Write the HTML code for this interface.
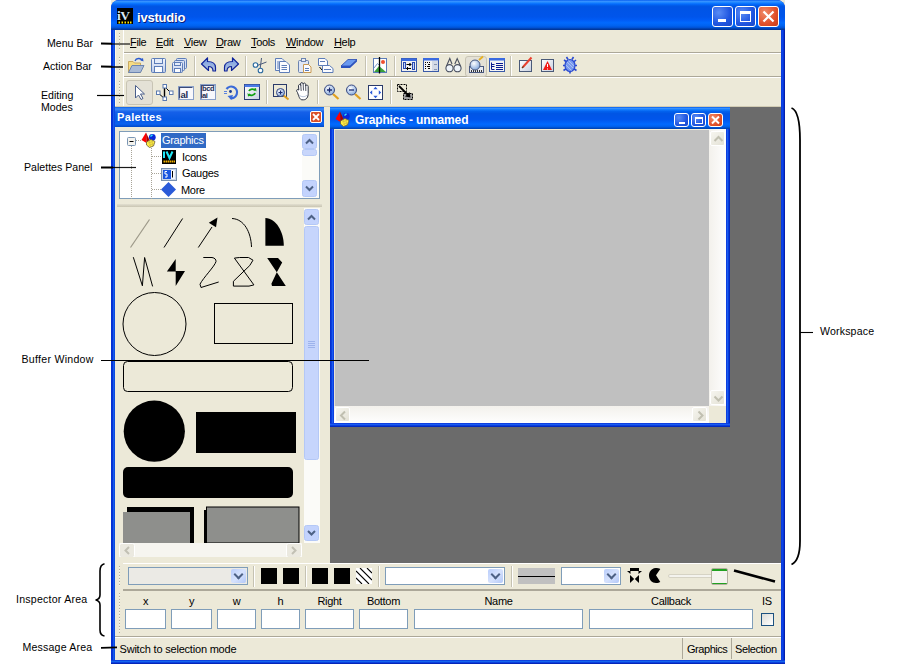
<!DOCTYPE html>
<html><head><meta charset="utf-8">
<style>
*{margin:0;padding:0;box-sizing:border-box}
html,body{width:907px;height:664px;overflow:hidden;background:#fff;font-family:"Liberation Sans",sans-serif;font-size:11px;color:#000}
.a{position:absolute}
.ann{position:absolute;font-size:10.6px;color:#000;white-space:nowrap;line-height:12px}
.hl{position:absolute;height:2px;background:#000}
#win{position:absolute;left:111px;top:0;width:674px;height:664px;background:#0831d9;border-radius:8px 8px 0 0;overflow:hidden}
#title{position:absolute;left:0;top:0;width:674px;height:30px;
background:linear-gradient(to bottom,#0058ee 0%,#3a93ff 4%,#288eff 7%,#127dff 10%,#0369fc 14%,#0262ee 17%,#0057e5 20%,#0054e5 24%,#0055eb 56%,#005bf5 66%,#026afe 76%,#0062ef 86%,#0052d6 92%,#0040ab 96%,#003092 100%)}
#lframe{position:absolute;left:0;top:30px;width:4px;height:634px;background:linear-gradient(to right,#0032d0,#0831d9 40%,#166aee 70%,#0831d9)}
#rframe{position:absolute;left:670px;top:30px;width:4px;height:634px;background:linear-gradient(to right,#0831d9,#0b4ae8 30%,#0831d9 65%,#001890)}
#bframe{position:absolute;left:0;top:660px;width:674px;height:4px;background:linear-gradient(to bottom,#0831d9,#166aee 40%,#0831d9 70%,#001ea0)}
#client{position:absolute;left:4px;top:30px;width:666px;height:630px;background:#ece9d8;overflow:hidden}
.tbtn{position:absolute;width:21px;height:21px;border:1px solid #fff;border-radius:3px;
background:radial-gradient(circle at 30% 30%,#5a8cf5,#1f55e0 60%,#1a48c8)}
.tbtn.close{background:radial-gradient(circle at 30% 30%,#f08b6a,#e0502a 60%,#c83c18)}
.menu{position:absolute;top:7px;font-size:11px}
.menu u{text-decoration:underline}
.sep{position:absolute;width:2px;border-left:1px solid #c5c2b2;border-right:1px solid #fff}
.grip{position:absolute;width:1px;background-image:linear-gradient(to bottom,#b0ac9c 0,#b0ac9c 1px,#f8f6ee 1px,#f8f6ee 2px,transparent 2px);background-size:1px 3px;background-repeat:repeat-y}
.ico{position:absolute;width:16px;height:16px}
.combo{position:absolute;height:18px;border:1px solid #7f9db9;background:#fff}
.combo i{position:absolute;top:1px;width:15px;height:14px;border-radius:2px;background:linear-gradient(135deg,#b9cdfb,#d6e2fd 50%,#b3c8f8)}
.combo i:after{content:"";position:absolute;left:4px;top:2px;width:5px;height:5px;border-right:2px solid #4d6185;border-bottom:2px solid #4d6185;transform:rotate(45deg)}
.wbtn{position:absolute;width:15px;height:14px;border:1px solid #fff;border-radius:3px;background:radial-gradient(circle at 30% 30%,#5a8cf5,#1f55e0 60%,#1a48c8)}
.wbtn.close{background:radial-gradient(circle at 30% 30%,#f08b6a,#e0502a 60%,#c83c18)}
.sbtn{position:absolute;width:15px;height:15px;border:1px solid #fff;border-radius:2px;background:linear-gradient(135deg,#f6f5ef,#e4e2d6)}
.lbl{text-align:center;letter-spacing:-0.3px;line-height:13px;white-space:nowrap}
.inp{position:absolute;top:609px;height:20px;border:1px solid #7f9db9;background:#fff}
</style></head><body>

<!-- annotations left -->
<div class="ann" style="left:47px;top:37px">Menu Bar</div>
<div class="ann" style="left:43px;top:60px">Action Bar</div>
<div class="ann" style="left:41px;top:89px">Editing</div>
<div class="ann" style="left:41px;top:101px">Modes</div>
<div class="ann" style="left:24px;top:161px">Palettes Panel</div>
<div class="ann" style="left:21.5px;top:353px;letter-spacing:0.27px">Buffer Window</div>
<div class="ann" style="left:16px;top:593px;letter-spacing:0.22px">Inspector Area</div>
<div class="ann" style="left:22.5px;top:641px;letter-spacing:0.18px">Message Area</div>
<div class="ann" style="left:820px;top:325px;letter-spacing:0.16px">Workspace</div>

<div class="a" style="left:111px;top:0;width:7px;height:7px;background:#ece9d8"></div>
<div class="a" style="left:778px;top:0;width:7px;height:7px;background:#ece9d8"></div>
<div id="win">
  <div id="title">
    <svg class="a" style="left:6px;top:8px" width="16" height="16" viewBox="0 0 16 16">
      <rect width="16" height="16" fill="#000"/>
      <text x="0" y="12" font-family="Liberation Serif" font-weight="bold" font-size="13.5" fill="#d8e8f8" letter-spacing="-0.5">iV</text>
      <path d="M1.5 14.5 H3 M4.5 14.5 H6 M7.5 14.5 H9 M10.5 14.5 H12 M13 14.5 H14.5" stroke="#ffe800" stroke-width="2"/>
    </svg>
    <div class="a" style="left:26px;top:10px;color:#fff;font-weight:bold;font-size:13px;line-height:15px;letter-spacing:-0.2px;text-shadow:1px 1px 0 #0a1e7a">ivstudio</div>
    <div class="tbtn" style="left:601px;top:6px"><div class="a" style="left:5px;top:12px;width:8px;height:3px;background:#fff"></div></div>
    <div class="tbtn" style="left:624px;top:6px"><div class="a" style="left:4px;top:4px;width:11px;height:11px;border:1px solid #fff;border-top-width:3px"></div></div>
    <div class="tbtn close" style="left:647px;top:6px"><svg class="a" style="left:0;top:0" width="19" height="19" viewBox="0 0 19 19"><path d="M4.5 4.5 L14.5 14.5 M14.5 4.5 L4.5 14.5" stroke="#fff" stroke-width="2.2"/></svg></div>
  </div>
  <div id="lframe"></div><div id="rframe"></div><div id="bframe"></div>
  <div id="client"></div>
</div>
<!-- CLIENT CONTENT (page coords) -->
<!-- rebar bands -->
<div class="a" style="left:115px;top:30px;width:1px;height:77px;background:#fff8e6"></div>
<div class="a" style="left:123px;top:30px;width:1px;height:76px;background:#fff"></div>
<div class="a" style="left:124px;top:52px;width:657px;height:1px;background:#aca899"></div>
<div class="a" style="left:124px;top:53px;width:657px;height:1px;background:#fff"></div>
<div class="a" style="left:124px;top:76px;width:657px;height:1px;background:#aca899"></div>
<div class="a" style="left:124px;top:77px;width:657px;height:1px;background:#fff"></div>
<div class="a" style="left:115px;top:106px;width:666px;height:1px;background:#d2ccb4"></div>
<div class="grip" style="left:119px;top:33px;height:18px"></div>
<div class="grip" style="left:119px;top:57px;height:18px"></div>
<div class="grip" style="left:119px;top:81px;height:22px"></div>
<!-- menu -->
<div class="a" style="left:130px;top:36px;white-space:nowrap;font-size:11px;line-height:13px;letter-spacing:-0.35px">
<span class="a" style="left:0"><u>F</u>ile</span>
<span class="a" style="left:26px"><u>E</u>dit</span>
<span class="a" style="left:54px"><u>V</u>iew</span>
<span class="a" style="left:86px"><u>D</u>raw</span>
<span class="a" style="left:121px"><u>T</u>ools</span>
<span class="a" style="left:156px"><u>W</u>indow</span>
<span class="a" style="left:204px"><u>H</u>elp</span>
</div>
<!-- separators action bar -->
<div class="sep" style="left:194px;top:56px;height:20px"></div>
<div class="sep" style="left:245px;top:56px;height:20px"></div>
<div class="sep" style="left:365px;top:56px;height:20px"></div>
<div class="sep" style="left:394px;top:56px;height:20px"></div>
<div class="sep" style="left:510px;top:56px;height:20px"></div>
<!-- separators edit bar -->
<div class="sep" style="left:266px;top:80px;height:24px"></div>
<div class="sep" style="left:317px;top:80px;height:24px"></div>
<div class="sep" style="left:390px;top:80px;height:24px"></div>
<!-- pressed buttons -->
<div class="a" style="left:126px;top:80px;width:27px;height:25px;border:1px solid #c8c4b4;border-radius:3px;background:#e4e1d6"></div>
<div class="a" style="left:465px;top:56px;width:22px;height:21px;border:1px solid #c8c4b4;border-radius:3px;background:#e4e1d6"></div>

<!-- TOOLBAR ICONS -->
<svg class="a" style="left:115px;top:30px" width="666" height="77" viewBox="115 30 666 77">
<defs>
<linearGradient id="gb" x1="0" y1="0" x2="0" y2="1"><stop offset="0" stop-color="#f4f7fd"/><stop offset="1" stop-color="#b8c8e8"/></linearGradient>
<linearGradient id="ga" x1="0" y1="0" x2="0" y2="1"><stop offset="0" stop-color="#6f97e6"/><stop offset="1" stop-color="#b9c9dc"/></linearGradient>
<linearGradient id="gw" x1="0" y1="0" x2="1" y2="1"><stop offset="0" stop-color="#fff"/><stop offset="1" stop-color="#c8d0e0"/></linearGradient>
<radialGradient id="gl" cx="0.4" cy="0.35" r="0.6"><stop offset="0" stop-color="#fff"/><stop offset="1" stop-color="#8fb0e0"/></radialGradient>
</defs>
<!-- open -->
<path d="M128.5 61.5 H133 L134.5 63 H140.5 V72.5 H128.5 Z" fill="#f6dc84" stroke="#c8a860" stroke-width="1"/>
<path d="M128.5 72.5 L132 65.5 H144 L140.5 72.5 Z" fill="#aabbd6" stroke="#6c84b0" stroke-width="1"/>
<path d="M135 61 C136 58 141 57.5 142 60.5" stroke="#2a5ad0" stroke-width="1.3" fill="none"/>
<path d="M140 60 L143.5 61.5 L143 58 Z" fill="#2a5ad0"/>
<!-- save -->
<rect x="151.5" y="58.5" width="14" height="14" rx="1" fill="url(#gb)" stroke="#5d7db8"/>
<rect x="154.5" y="58.5" width="8" height="5" fill="#e4ecfa" stroke="#5d7db8"/>
<rect x="154.5" y="66.5" width="8" height="6" fill="#fafcff" stroke="#5d7db8"/>
<!-- save all -->
<rect x="176.5" y="58.5" width="10" height="10" rx="1" fill="#d6e0f4" stroke="#5d7db8"/>
<rect x="174.5" y="60.5" width="10" height="10" rx="1" fill="#d6e0f4" stroke="#5d7db8"/>
<rect x="172.5" y="62.5" width="10" height="10" rx="1" fill="url(#gb)" stroke="#5d7db8"/>
<rect x="174.5" y="62.5" width="6" height="3" fill="#e4ecfa" stroke="#5d7db8"/>
<rect x="174.5" y="68.5" width="6" height="4" fill="#fafcff" stroke="#5d7db8"/>
<!-- undo / redo -->
<path d="M201.5 64 L207.5 57.8 V61.5 C212 61.5 215.5 63.5 215.5 67.5 V71 H213 C213 68 211 66.5 208.5 66.5 V70.5 Z" fill="url(#ga)" stroke="#10249a" stroke-width="1.2" stroke-linejoin="round"/>
<path d="M238.5 64 L232.5 57.8 V61.5 C228 61.5 224.5 63.5 224.5 67.5 V71 H227 C227 68 229 66.5 231.5 66.5 V70.5 Z" fill="url(#ga)" stroke="#10249a" stroke-width="1.2" stroke-linejoin="round"/>
<!-- cut -->
<path d="M261.5 58 L260 70 M266.5 62 L256 66" stroke="#4a5a7a" stroke-width="1"/>
<circle cx="255.5" cy="65" r="2.3" fill="#fff" stroke="#2a6aa0" stroke-width="1.1"/>
<circle cx="260.5" cy="70.5" r="2.3" fill="#fff" stroke="#2a6aa0" stroke-width="1.1"/>
<!-- copy -->
<path d="M275.5 58.5 H282 L284.5 61 V70.5 H275.5 Z" fill="#f0f4fc" stroke="#5d7db8"/>
<path d="M279.5 61.5 H286 L289.5 65 V72.5 H279.5 Z" fill="#fbfcff" stroke="#5d7db8"/>
<path d="M277 62 H279 M277 64 H279 M277 66 H279 M277 68 H279 M281.5 65.5 H287 M281.5 67.5 H287 M281.5 69.5 H287" stroke="#5d7db8"/>
<!-- paste -->
<rect x="298.5" y="60.5" width="10" height="12" rx="1" fill="#dfe6f4" stroke="#6c84b0"/>
<rect x="301.5" y="58.5" width="4" height="3" fill="#e8ecf4" stroke="#6c84b0"/>
<path d="M303.5 64.5 H308.5 L311 67 V72.5 H303.5 Z" fill="#fbfcff" stroke="#c89850"/>
<path d="M305 68.5 H309 M305 70.5 H309" stroke="#5d7db8"/>
<!-- duplicate -->
<path d="M318.5 58.5 H325 L327.5 61 V65.5 H318.5 Z" fill="#fbfcff" stroke="#5d7db8"/>
<path d="M322.5 65.5 H329.5 L333 68.5 V72.5 H322.5 Z" fill="#fbfcff" stroke="#5d7db8"/>
<path d="M320 61.5 H325 M324 69.5 H331" stroke="#5d7db8"/>
<path d="M319.5 67 L322 70" stroke="#000" stroke-width="1"/>
<!-- eraser -->
<path d="M341 66 L348 59.5 H357 L350 66 Z" fill="#6a9af0" stroke="#2a4ab0" stroke-width="0.8"/>
<path d="M341 66 H350 V68 H341 Z M350 66 L357 59.5 V61.5 L350 68 Z" fill="#2a52c0"/>
<!-- image -->
<rect x="373.5" y="58.5" width="13" height="14" fill="#fff" stroke="#5d7db8"/>
<path d="M374 72 L379 66 L386 72 Z" fill="#3aa03a"/>
<path d="M374 68 L377.5 63.5 L380 66" stroke="#7a9ac8" fill="none"/>
<circle cx="383" cy="62" r="2" fill="#f05030"/>
<path d="M379.5 57 V73.5" stroke="#000" stroke-width="1.3"/>
<!-- win arrows -->
<rect x="401.5" y="58.5" width="15" height="13" fill="#f0f0f0" stroke="#3a5aa8"/>
<rect x="401.5" y="58.5" width="15" height="2.5" fill="#3a6ae0"/>
<rect x="403.5" y="62.5" width="2" height="6" fill="#c8d8f8" stroke="#2a4ab0"/>
<rect x="412.5" y="62.5" width="2" height="7" fill="#c8d8f8" stroke="#2a4ab0"/>
<path d="M406.5 64.5 H411 M409.5 63 L411 64.5 L409.5 66 M411 68.5 H406.5 M408 67 L406.5 68.5 L408 70" stroke="#000" stroke-width="1"/>
<!-- grid win -->
<rect x="423.5" y="58.5" width="15" height="13" fill="#f2f2f2" stroke="#3a5aa8"/>
<rect x="423" y="58" width="16" height="2.5" fill="#3a6ae0"/>
<path d="M425 62.5 H426 M427 62.5 H428 M429 62.5 H430 M425 64.5 H426 M428 64.5 H430 M425 66.5 H426 M427 66.5 H430 M425 68.5 H426 M428 68.5 H430" stroke="#000" stroke-width="1"/>
<rect x="432" y="61" width="6" height="10" fill="#d4dae6"/>
<path d="M434 64.5 H437 M434 69.5 H437" stroke="#8a96b0"/>
<!-- glasses -->
<circle cx="449.5" cy="68.2" r="3.6" fill="#eef4fa" stroke="#4a5060" stroke-width="1.1"/>
<circle cx="457.5" cy="68.2" r="3.6" fill="#eef4fa" stroke="#4a5060" stroke-width="1.1"/>
<path d="M446.5 66 L449.8 58.5 L452 64 M454.8 64 L457.2 58.5 L460.5 66" stroke="#4a5060" stroke-width="1.1" fill="none"/>
<!-- magnifier (pressed) -->
<rect x="469.5" y="66.5" width="14" height="6" fill="#e8eaf0" stroke="#4a5a80"/>
<path d="M471.5 70 V72 M473.5 70 V72 M475.5 70 V72 M477.5 70 V72 M479.5 70 V72 M481.5 70 V72" stroke="#333"/>
<circle cx="475" cy="65" r="5" fill="url(#gl)" stroke="#4a5a80"/>
<path d="M479 60 L483 56.5" stroke="#e8b020" stroke-width="1.8"/>
<!-- list win -->
<rect x="489.5" y="58.5" width="15" height="13" fill="#f4f4f4" stroke="#3a5aa8"/>
<rect x="489" y="58" width="16" height="2.5" fill="#3a6ae0"/>
<path d="M491.5 62.5 V69.5 H494.5 M491.5 64.5 H494.5 M491.5 66.5 H494.5 M496 63.5 H503 M496 65.5 H503 M496 67.5 H503 M496 69.5 H503" stroke="#0a1a90" stroke-width="1" fill="none"/>
<!-- notepad -->
<rect x="519.5" y="60.5" width="12" height="11" fill="url(#gw)" stroke="#4a5a78"/>
<path d="M523 67 L531.5 57.5" stroke="#e84030" stroke-width="2"/>
<path d="M522 68 L523.5 66.5" stroke="#703010" stroke-width="1.5"/>
<!-- warning -->
<rect x="541.5" y="59.5" width="12" height="12" fill="url(#gw)" stroke="#4a5a78"/>
<path d="M547.5 61 L552 70 H543 Z" fill="#f01818"/>
<path d="M547.5 64 V67 M547.5 68.5 V69.5" stroke="#fff" stroke-width="1"/>
<!-- bug -->
<path d="M564 60 L567.5 62.5 M563 65.5 H566 M563.5 70.5 L566.5 68.5 M576 60 L573 62.5 M577 65.5 H574 M576.5 70.5 L573.5 68.5 M566.5 57 L568 59.5 M573.5 57 L572 59.5 M570 71 V73.5" stroke="#2a4ad0" stroke-width="1.6"/>
<ellipse cx="570" cy="65.5" rx="5" ry="6" fill="#7a9aee" stroke="#2a4ad0" stroke-width="1.2"/>
<path d="M567 62 L573 68 M566 65 L571.5 70.5 M568.5 60.5 L574 66" stroke="#b0c4f4" stroke-width="0.9"/>
<!-- EDIT BAR -->
<path d="M135.5 85.5 V98 L138.5 95 L141 99.5 L143 98.5 L140.5 94 H144.5 Z" fill="#fff" stroke="#4a5e8a" stroke-width="1" stroke-linejoin="round"/>
<path d="M157.5 92.5 L164.5 98.5 M164.5 86.5 L170.5 92.5" stroke="#000" stroke-width="1"/>
<path d="M164.5 88 V97" stroke="#000" stroke-width="1.4"/>
<rect x="156.5" y="91" width="3.5" height="3.5" fill="#fff" stroke="#5a7ab0"/>
<rect x="163" y="84.5" width="3.5" height="3.5" fill="#fff" stroke="#5a7ab0"/>
<rect x="169.5" y="91" width="3.5" height="3.5" fill="#fff" stroke="#5a7ab0"/>
<rect x="163" y="97" width="3.5" height="3.5" fill="#fff" stroke="#5a7ab0"/>
<rect x="178.5" y="86.5" width="15" height="13" fill="#f8f8fc" stroke="#8aa0c8" stroke-width="1"/>
<path d="M179.5 98.5 V87.5 H192.5" stroke="#3a4a78" stroke-width="1.2" fill="none"/>
<text x="180.5" y="97.5" font-size="9.5" font-weight="bold" font-family="Liberation Sans" fill="#1a2a50" letter-spacing="-0.3">al</text>
<rect x="200.5" y="84.5" width="15" height="15" fill="#f8f8fc" stroke="#8aa0c8" stroke-width="1"/>
<path d="M201.5 98.5 V85.5 H214.5" stroke="#3a4a78" stroke-width="1.2" fill="none"/>
<text x="202" y="91.3" font-size="7.5" font-weight="bold" font-family="Liberation Sans" fill="#1a2a50" letter-spacing="-0.4">bcd</text>
<text x="202" y="97.8" font-size="7.5" font-weight="bold" font-family="Liberation Sans" fill="#1a2a50" letter-spacing="-0.4">ai</text>
<path d="M226.5 89 A5.8 5.8 0 1 1 230 98" stroke="#3a6ad8" stroke-width="2.2" fill="none"/>
<path d="M227.5 96 L231.5 100 L233 95 Z" fill="#3a6ad8"/>
<circle cx="230.5" cy="91.5" r="1.4" fill="#1a3a90"/>
<path d="M224 91.5 H227 M224 93.5 H227" stroke="#5a82e0"/>
<rect x="244.5" y="84.5" width="15" height="15" fill="url(#gw)" stroke="#2a3a70"/>
<rect x="244.5" y="84.5" width="15" height="2.5" fill="#4a7ae8"/>
<path d="M249 91 C250 88.5 254 88.5 255 90.5 M255 93 C254 96 250 96 249 94" stroke="#10a010" stroke-width="1.8" fill="none"/>
<path d="M253.5 89 L256.5 91.5 L256 88 Z M250.5 95.5 L247.5 93 L248 96.5 Z" fill="#10a010"/>
<!-- zoom rect -->
<rect x="273.5" y="84.5" width="13" height="12" fill="none" stroke="#2a3a6a"/>
<path d="M283 95 L288.5 99.5" stroke="#e0a020" stroke-width="2"/>
<circle cx="280.5" cy="92.5" r="4" fill="url(#gl)" stroke="#3a4a80"/>
<path d="M278.5 92.5 H282.5 M280.5 90.5 V94.5" stroke="#1a2a70" stroke-width="1.2"/>
<!-- hand -->
<path d="M297.5 92.5 C296 91 296.5 88.5 298.8 90 L298.5 86 C298.3 84.3 300.5 84 300.8 85.5 L300.6 84 C300.5 82.2 302.8 82 303 83.8 L303.2 84.2 C303.3 82.6 305.5 82.6 305.6 84.4 L305.7 86 C306 84.6 308.2 84.8 308.2 86.6 V93.5 C308.2 97 306.5 99.8 303.5 99.8 H302 C299.8 99.8 298.8 96.5 297.5 92.5 Z" fill="#fff" stroke="#2a3040" stroke-width="1"/>
<path d="M300.8 85.5 L301.2 91 M303.2 84.2 L303.5 90.5 M305.7 86 L305.8 91" stroke="#2a3040" stroke-width="0.8"/>
<path d="M299 95 C301 97 305 97.5 307 95" stroke="#b8c4d8" stroke-width="1" fill="none"/>
<!-- zoom in/out -->
<path d="M333 94 L338.5 99" stroke="#e0a020" stroke-width="2.2"/>
<circle cx="329.5" cy="90" r="5" fill="url(#gl)" stroke="#3a4a80"/>
<path d="M327 90 H332 M329.5 87.5 V92.5" stroke="#1a2a70" stroke-width="1.3"/>
<path d="M355 94 L360.5 99" stroke="#e0a020" stroke-width="2.2"/>
<circle cx="351.5" cy="90" r="5" fill="url(#gl)" stroke="#3a4a80"/>
<path d="M349 90 H354" stroke="#1a2a70" stroke-width="1.3"/>
<!-- fit -->
<rect x="368.5" y="85.5" width="14" height="14" fill="#fff" stroke="#2a3a6a"/>
<path d="M375.5 86.8 L373.3 89.2 H377.7 Z M375.5 98.2 L373.3 95.8 H377.7 Z M369.8 92.5 L372.2 90.3 V94.7 Z M381.2 92.5 L378.8 90.3 V94.7 Z" fill="#2a5ad8"/>
<!-- select dashed -->
<rect x="397.5" y="84.5" width="9" height="7" fill="none" stroke="#000" stroke-dasharray="2 1"/>
<rect x="403.5" y="93.5" width="9" height="6" fill="#a0a0a0" stroke="#000" stroke-dasharray="2 1"/>
<path d="M399 86 L409 96" stroke="#000" stroke-width="1.8"/>
<path d="M410.5 97.5 L405 96.5 L409.5 92 Z" fill="#000"/>
</svg>
<!-- palettes panel -->
<div class="a" style="left:115px;top:107px;width:209px;height:20px;background:linear-gradient(to bottom,#0a5fe8 0%,#3d8bf7 10%,#1560e9 25%,#0758e3 60%,#0a62f0 85%,#0048c8 100%)"></div>
<div class="a" style="left:117px;top:110.5px;color:#fff;font-weight:bold;font-size:11px;line-height:13px;letter-spacing:0.35px">Palettes</div>
<div class="a" style="left:310px;top:111px;width:12px;height:12px;border:1px solid #fff;border-radius:2px;background:#d9502a"><svg class="a" style="left:0;top:0" width="10" height="10" viewBox="0 0 10 10"><path d="M2 2 L8 8 M8 2 L2 8" stroke="#fff" stroke-width="1.8"/></svg></div>
<!-- tree box -->
<div class="a" style="left:119px;top:131px;width:201px;height:68px;border:1px solid #7f9db9;background:#fff"></div>
<div class="a" style="left:117px;top:204px;width:205px;height:3px;background:linear-gradient(to bottom,#e2dfd0,#c9c5b3)"></div>

<!-- tree content -->
<svg class="a" style="left:119px;top:131px" width="202" height="69" viewBox="0 0 202 69">
<g stroke="#a8a498" stroke-width="1" stroke-dasharray="1 1">
<path d="M12.5 15 V69"/>
<path d="M32.5 17 V69"/>
<path d="M17 9.5 H22"/>
<path d="M33 25.5 H42"/>
<path d="M33 42.5 H42"/>
<path d="M33 58.5 H42"/>
</g>
<rect x="8.5" y="6.5" width="8" height="8" rx="1" fill="#f4f3ee" stroke="#7a96b4"/>
<path d="M10.5 10.5 H14.5" stroke="#000"/>
<!-- graphics icon -->
<g transform="translate(22,1)">
<path d="M0.5 8 L5 0.5 L5.5 11 Z" fill="#f00"/>
<path d="M5 0.5 L8.5 8 L5.5 11 Z" fill="#a00"/>
<circle cx="11.3" cy="5.3" r="3.4" fill="#0828d8"/>
<path d="M9.5 4.5 L11.5 2.8" stroke="#30e8ff" stroke-width="1.4"/>
<path d="M5.5 10 L10 7.5 L14 9.5 L12.5 14 L8.5 15.5 L5.5 13 Z" fill="#fff040" stroke="#6a5a3a" stroke-width="0.8"/>
<path d="M7 11 L12 9.5 M8 13.5 L12.5 11.5 M8.5 9 L9.5 15 M11 8.5 L11.5 14" stroke="#c8b040" stroke-width="0.6"/>
</g>
<rect x="42" y="2" width="45" height="15" fill="#316ac5"/>
<text x="43" y="13" font-size="11" fill="#fff" font-family="Liberation Sans" letter-spacing="-0.3">Graphics</text>
<!-- icons icon -->
<rect x="43" y="19" width="14" height="14" fill="#000"/>
<path d="M45 20.5 V27 M47.5 20.5 L50.5 27 L53.5 20.5" stroke="#20e8f8" stroke-width="2" fill="none"/>
<path d="M44.5 30.5 H56" stroke="#f0b000" stroke-width="2.2" stroke-dasharray="1.5 0.5"/>
<text x="63" y="30" font-size="11" font-family="Liberation Sans" letter-spacing="-0.3">Icons</text>
<!-- gauges icon -->
<rect x="42.5" y="37.5" width="15" height="12" fill="#c8d4e8" stroke="#7890b0"/>
<rect x="44" y="39" width="8" height="9" fill="#1a56e0"/>
<rect x="52" y="39" width="4" height="9" fill="#f0f4fc"/>
<path d="M48 40.5 H46 V43 H48 V46 H46 M52.5 41 L54 40 V46.5" stroke="#fff" stroke-width="1" fill="none"/>
<path d="M53.5 40 V46.5" stroke="#000" stroke-width="1"/>
<text x="63" y="46" font-size="11" font-family="Liberation Sans" letter-spacing="-0.3">Gauges</text>
<!-- more icon -->
<path d="M49.5 51 L57 58.5 L49.5 66 L42 58.5 Z" fill="#2a5ad8"/>
<text x="62" y="63" font-size="11" font-family="Liberation Sans" letter-spacing="-0.3">More</text>
<!-- scrollbar -->
<rect x="183" y="1" width="17" height="66" fill="#fbfbf8"/>
<rect x="183.5" y="3.5" width="14" height="14" rx="2" fill="#c3d3fd" stroke="#b4c8f6"/>
<path d="M187 12.5 L190.5 9 L194 12.5" stroke="#4d6185" stroke-width="2" fill="none"/>
<rect x="183.5" y="18.5" width="14" height="6" rx="2" fill="#c8d6fb" stroke="#b4c8f6"/>
<rect x="183.5" y="49.5" width="14" height="16" rx="2" fill="#c3d3fd" stroke="#b4c8f6"/>
<path d="M187 55.5 L190.5 59 L194 55.5" stroke="#4d6185" stroke-width="2" fill="none"/>
</svg>
<!-- buffer shapes -->
<svg class="a" style="left:115px;top:207px" width="209" height="350" viewBox="115 207 209 350">
<g fill="none" stroke="#000" stroke-width="1">
<path d="M130.5 247.5 L149.5 219.5" stroke="#9c9888" stroke-width="1.2"/>
<path d="M164 247.5 L182.6 218.5"/>
<path d="M198.3 247.5 L212 227"/>
<path d="M232 218.5 C244 219 251 232 251.5 247"/>
<path d="M133.3 257.2 L142.4 285.8 L144.6 257.5 L152.6 286.4"/>
<path d="M203.3 257.5 L212 257.5 C215 258 216 259.5 216 261.5 C215 266 203 278 200 284.2 L201 287.5 L218.7 282"/>
<path d="M234.4 258.1 L239.5 257.5 L248.5 257.5 L253 260.2 L249.7 265.6 L233.4 281.3 L233.4 286.1 L249 286.1 L253.9 284.9 Z"/>
<circle cx="154.5" cy="324" r="31.5"/>
<rect x="214.5" y="303.5" width="78" height="40"/>
<rect x="123.5" y="361.5" width="169" height="30" rx="4"/>
</g>
<path d="M217.5 217.5 L208.8 222.8 L216 227.3 Z" fill="#000"/>
<path d="M265.4 218 C276 218 283.8 232 283.8 245.7 L265.4 245.7 Z" fill="#000"/>
<path d="M175.7 259 L166.9 271.5 L175.7 271.5 Z M175.7 271 L185 271 L175.7 286 Z" fill="#000"/>
<path d="M267.2 258.1 L278 258.1 L282.2 262.6 L276.8 272.2 Z M276.8 272.2 L285.8 286.1 L272 286.1 L271.4 283.7 Z" fill="#000"/>
<circle cx="154.3" cy="431.2" r="30.6" fill="#000"/>
<rect x="196" y="412" width="100" height="41" fill="#000"/>
<rect x="123" y="467" width="170" height="31" rx="5" fill="#000"/>
<rect x="127" y="507" width="67" height="36" fill="#000"/>
<rect x="123" y="512" width="67" height="31" fill="#8e8f8c"/>
<rect x="204" y="510" width="95" height="33" fill="#000"/>
<rect x="206.5" y="507" width="92.5" height="36" fill="#8e8f8c" stroke="#000" stroke-width="1"/>
<!-- v scrollbar -->
<rect x="304" y="208" width="16" height="335" fill="#fbfbf8"/>
<rect x="304.5" y="209.5" width="14" height="15" rx="2" fill="#c3d3fd" stroke="#b4c8f6"/>
<path d="M308 219.5 L311.5 216 L315 219.5" stroke="#4d6185" stroke-width="2" fill="none"/>
<rect x="304.5" y="226.5" width="14" height="233" rx="2" fill="#c6d5fc" stroke="#b4c8f6"/>
<path d="M308 341.5 H315 M308 343.5 H315 M308 345.5 H315 M308 347.5 H315" stroke="#9db3ec" stroke-width="1"/>
<rect x="304.5" y="525.5" width="14" height="15" rx="2" fill="#c3d3fd" stroke="#b4c8f6"/>
<path d="M308 531 L311.5 534.5 L315 531" stroke="#4d6185" stroke-width="2" fill="none"/>
<!-- h scrollbar -->
<rect x="119" y="543" width="183" height="15" fill="#f6f5f0"/>
<rect x="119.5" y="543.5" width="15" height="14" rx="2" fill="#ebe9e0" stroke="#fff"/>
<path d="M129 547 L125.5 550.5 L129 554" stroke="#c2c0b4" stroke-width="2" fill="none"/>
<rect x="286.5" y="543.5" width="15" height="14" rx="2" fill="#ebe9e0" stroke="#fff"/>
<path d="M292 547 L295.5 550.5 L292 554" stroke="#c2c0b4" stroke-width="2" fill="none"/>
</svg>
<!-- workspace -->
<div class="a" style="left:324px;top:107px;width:6px;height:456px;background:#ece9d8"></div>
<div class="a" style="left:330px;top:107px;width:451px;height:456px;background:#6b6b6b"></div>

<!-- graphics window -->
<div class="a" style="left:330px;top:107px;width:400px;height:320px;background:#0831d9"></div>
<div class="a" style="left:330px;top:107px;width:400px;height:22px;background:linear-gradient(to bottom,#0058ee 0%,#3a93ff 6%,#127dff 12%,#0262ee 20%,#0055e5 30%,#0055eb 56%,#026afe 78%,#0062ef 88%,#0040ab 100%)"></div>
<div class="a" style="left:330px;top:129px;width:4px;height:298px;background:linear-gradient(to right,#0028c8,#0a40e0 40%,#1a5ef2 60%,#0831d9)"></div>
<div class="a" style="left:726px;top:129px;width:4px;height:298px;background:linear-gradient(to right,#0831d9,#1a5ef2 40%,#0a40e0 60%,#0020b0)"></div>
<div class="a" style="left:330px;top:423px;width:400px;height:4px;background:linear-gradient(to bottom,#0831d9,#1a5ef2 40%,#0a40e0 60%,#0020b0)"></div>
<div class="a" style="left:334px;top:129px;width:375px;height:277px;background:#c0c0c0;border-top:1px solid #f4eed8;border-left:1px solid #e8e4d4"></div>
<div class="a" style="left:709px;top:129px;width:17px;height:277px;background:linear-gradient(to right,#f3f1ec,#fefefe)"></div>
<div class="a" style="left:334px;top:406px;width:375px;height:17px;background:linear-gradient(to bottom,#f3f1ec,#fefefe)"></div>
<div class="a" style="left:709px;top:406px;width:17px;height:17px;background:#ece9d8"></div>
<div class="a" style="left:355px;top:113px;color:#fff;font-weight:bold;font-size:12px;line-height:14px;white-space:nowrap;letter-spacing:-0.15px">Graphics - unnamed</div>
<svg class="a" style="left:335px;top:111px" width="16" height="16" viewBox="0 0 16 16">
<path d="M0.5 8 L5 0.5 L5.5 11 Z" fill="#f00"/>
<path d="M5 0.5 L8.5 8 L5.5 11 Z" fill="#a00"/>
<circle cx="11.3" cy="5.3" r="3.4" fill="#0828d8"/>
<path d="M9.5 4.5 L11.5 2.8" stroke="#30e8ff" stroke-width="1.4"/>
<path d="M5.5 10 L10 7.5 L14 9.5 L12.5 14 L8.5 15.5 L5.5 13 Z" fill="#fff040" stroke="#6a5a3a" stroke-width="0.8"/>
<path d="M7 11 L12 9.5 M8 13.5 L12.5 11.5 M8.5 9 L9.5 15 M11 8.5 L11.5 14" stroke="#c8b040" stroke-width="0.6"/>
</svg>
<div class="wbtn" style="left:674px;top:113px"><div class="a" style="left:4px;top:8px;width:6px;height:2px;background:#fff"></div></div>
<div class="wbtn" style="left:691px;top:113px"><div class="a" style="left:3px;top:3px;width:8px;height:7px;border:1px solid #fff;border-top-width:2px"></div></div>
<div class="wbtn close" style="left:708px;top:113px"><svg class="a" style="left:0;top:0" width="13" height="12" viewBox="0 0 13 12"><path d="M3 2.5 L10 9.5 M10 2.5 L3 9.5" stroke="#fff" stroke-width="2"/></svg></div>
<!-- gfx scrollbars buttons -->
<div class="sbtn" style="left:710px;top:131px"><svg class="a" style="left:0;top:0" width="15" height="15"><path d="M3.5 9 L7.5 5 L11.5 9" stroke="#c0bfb0" stroke-width="2" fill="none"/></svg></div>
<div class="sbtn" style="left:710px;top:390px"><svg class="a" style="left:0;top:0" width="15" height="15"><path d="M3.5 5.5 L7.5 9.5 L11.5 5.5" stroke="#c0bfb0" stroke-width="2" fill="none"/></svg></div>
<div class="sbtn" style="left:335px;top:407px"><svg class="a" style="left:0;top:0" width="15" height="15"><path d="M9 3.5 L5 7.5 L9 11.5" stroke="#c0bfb0" stroke-width="2" fill="none"/></svg></div>
<div class="sbtn" style="left:692px;top:407px"><svg class="a" style="left:0;top:0" width="15" height="15"><path d="M5.5 3.5 L9.5 7.5 L5.5 11.5" stroke="#c0bfb0" stroke-width="2" fill="none"/></svg></div>

<!-- inspector controls -->
<div class="a" style="left:115px;top:563px;width:666px;height:74px;background:#ece9d8"></div>
<div class="a" style="left:123px;top:563px;width:658px;height:1px;background:#fff"></div>
<div class="a" style="left:123px;top:589px;width:658px;height:2px;background:#aca899"></div>
<div class="a" style="left:115px;top:636px;width:666px;height:1px;background:#aca899"></div>
<div class="a" style="left:115px;top:637px;width:666px;height:1px;background:#fff"></div>
<div class="grip" style="left:119px;top:566px;height:21px"></div>
<div class="grip" style="left:119px;top:593px;height:40px"></div>
<div class="combo" style="left:128px;top:567px;width:120px;background:#ebeae5"><i style="left:102px"></i></div>
<div class="sep" style="left:253px;top:566px;height:21px"></div>
<div class="a" style="left:261px;top:568px;width:16px;height:16px;background:#000"></div>
<div class="a" style="left:283px;top:568px;width:16px;height:16px;background:#000"></div>
<div class="sep" style="left:305px;top:566px;height:21px"></div>
<div class="a" style="left:312px;top:568px;width:16px;height:16px;background:#000"></div>
<div class="a" style="left:334px;top:568px;width:16px;height:16px;background:#000"></div>
<svg class="a" style="left:356px;top:568px" width="16" height="16" viewBox="0 0 16 16"><rect width="16" height="16" fill="#fff"/><path d="M0 3 L13 16 M4 0 L16 12 M11 0 L16 5 M0 10 L6 16" stroke="#000" stroke-width="1.1"/></svg>
<div class="sep" style="left:378px;top:566px;height:21px"></div>
<div class="combo" style="left:385px;top:567px;width:120px"><i style="left:102px"></i></div>
<div class="sep" style="left:511px;top:566px;height:21px"></div>
<div class="a" style="left:518px;top:568px;width:37px;height:16px;background:#c0c0c0"></div>
<div class="a" style="left:518px;top:576px;width:37px;height:1px;background:#000"></div>
<div class="combo" style="left:561px;top:567px;width:60px"><i style="left:42px"></i></div>
<svg class="a" style="left:626px;top:567px" width="40" height="18" viewBox="626 567 40 18">
<rect x="630" y="568" width="9" height="3" fill="#000"/>
<path d="M627 571 H630.5 V574 Z M642 571 H638.5 V574 Z" fill="#000"/>
<path d="M630 575 L634.2 579 L630 583 Z M639 575 L634.8 579 L639 583 Z" fill="#000"/>
<path d="M655.5 568 C651 568.5 649 572 649 575.5 C649 580 652 583 656 583 C658 583 659.5 582.5 660.3 582 L656 575.3 L660.3 569 C659 568.3 657.5 568 655.5 568 Z" fill="#000"/>
</svg>
<div class="a" style="left:668px;top:574px;width:46px;height:4px;border:1px solid #d6d3c4;border-radius:2px;background:#f4f3ee"></div>
<div class="a" style="left:711px;top:568px;width:17px;height:17px;border:1px solid #b4b1a0;border-radius:2px;background:linear-gradient(to bottom,#21a121 0,#21a121 2px,#f4f3ee 2px,#f4f3ee 14px,#21a121 14px)"></div>
<svg class="a" style="left:732px;top:568px" width="46" height="16" viewBox="732 568 46 16"><path d="M734 570.5 L775 581.5" stroke="#000" stroke-width="2.6"/></svg>

<div class="a lbl" style="left:125px;top:595px;width:41px">x</div>
<div class="a lbl" style="left:171px;top:595px;width:41px">y</div>
<div class="a lbl" style="left:217px;top:595px;width:39px">w</div>
<div class="a lbl" style="left:261px;top:595px;width:39px">h</div>
<div class="a lbl" style="left:305px;top:595px;width:49px">Right</div>
<div class="a lbl" style="left:359px;top:595px;width:49px">Bottom</div>
<div class="a lbl" style="left:414px;top:595px;width:169px">Name</div>
<div class="a lbl" style="left:589px;top:595px;width:164px">Callback</div>
<div class="a lbl" style="left:759px;top:595px;width:16px">IS</div>
<div class="inp" style="left:125px;width:41px"></div>
<div class="inp" style="left:171px;width:41px"></div>
<div class="inp" style="left:217px;width:39px"></div>
<div class="inp" style="left:261px;width:39px"></div>
<div class="inp" style="left:305px;width:49px"></div>
<div class="inp" style="left:359px;width:49px"></div>
<div class="inp" style="left:414px;width:169px"></div>
<div class="inp" style="left:589px;width:164px"></div>
<div class="a" style="left:761px;top:613px;width:13px;height:13px;border:1px solid #1c5180;background:linear-gradient(135deg,#dcdcd7,#fff)"></div>
<div class="a" style="left:119.5px;top:643px;white-space:nowrap;line-height:13px;letter-spacing:-0.2px">Switch to selection mode</div>
<div class="a" style="left:682px;top:638px;width:1px;height:21px;background:#aca899"></div>
<div class="a" style="left:731px;top:638px;width:1px;height:21px;background:#aca899"></div>
<div class="a" style="left:687px;top:643px;white-space:nowrap;line-height:13px;letter-spacing:-0.45px">Graphics</div>
<div class="a" style="left:735px;top:643px;white-space:nowrap;line-height:13px;letter-spacing:-0.4px">Selection</div>



<!-- ANNOTATION OVERLAY -->
<svg class="a" style="left:0;top:0" width="907" height="664" viewBox="0 0 907 664">
<g fill="none" stroke="#000" stroke-linecap="butt">
<path d="M101 43.5 L112 43.8" stroke-width="2"/>
<path d="M111 44 L130 44" stroke-width="2" stroke-opacity="0.55"/>
<path d="M101 66.5 L112 66.8" stroke-width="2"/>
<path d="M111 67 L123 67" stroke-width="1.6" stroke-opacity="0.9"/>
<path d="M97 95.5 L124 95.5" stroke-width="1.2"/>
<path d="M101 167.5 L113 167.5" stroke-width="2"/>
<path d="M111 167.5 L136 167.5" stroke-width="1.2" stroke-opacity="0.9"/>
<path d="M101 360.5 L369 360.5" stroke-width="1.2"/>
<path d="M101 647.8 L117 647.3" stroke-width="1.8"/>
<path d="M800 332.5 L813 332.5" stroke-width="1.1"/>
<path d="M791.5 108 C797 110 800 120 800 140 L800 541 C800 556 797 562 791.5 564.5" stroke-width="1.8"/>
<path d="M104.5 563.8 C101.5 564.5 100 567 100 571 L100 595 C100 598 98.5 599.5 95.6 600 C98.5 600.5 100 602 100 605 L100 630 C100 633.5 101.5 635.5 104.5 636" stroke-width="1.6"/>
</g>
</svg>
</body></html>
